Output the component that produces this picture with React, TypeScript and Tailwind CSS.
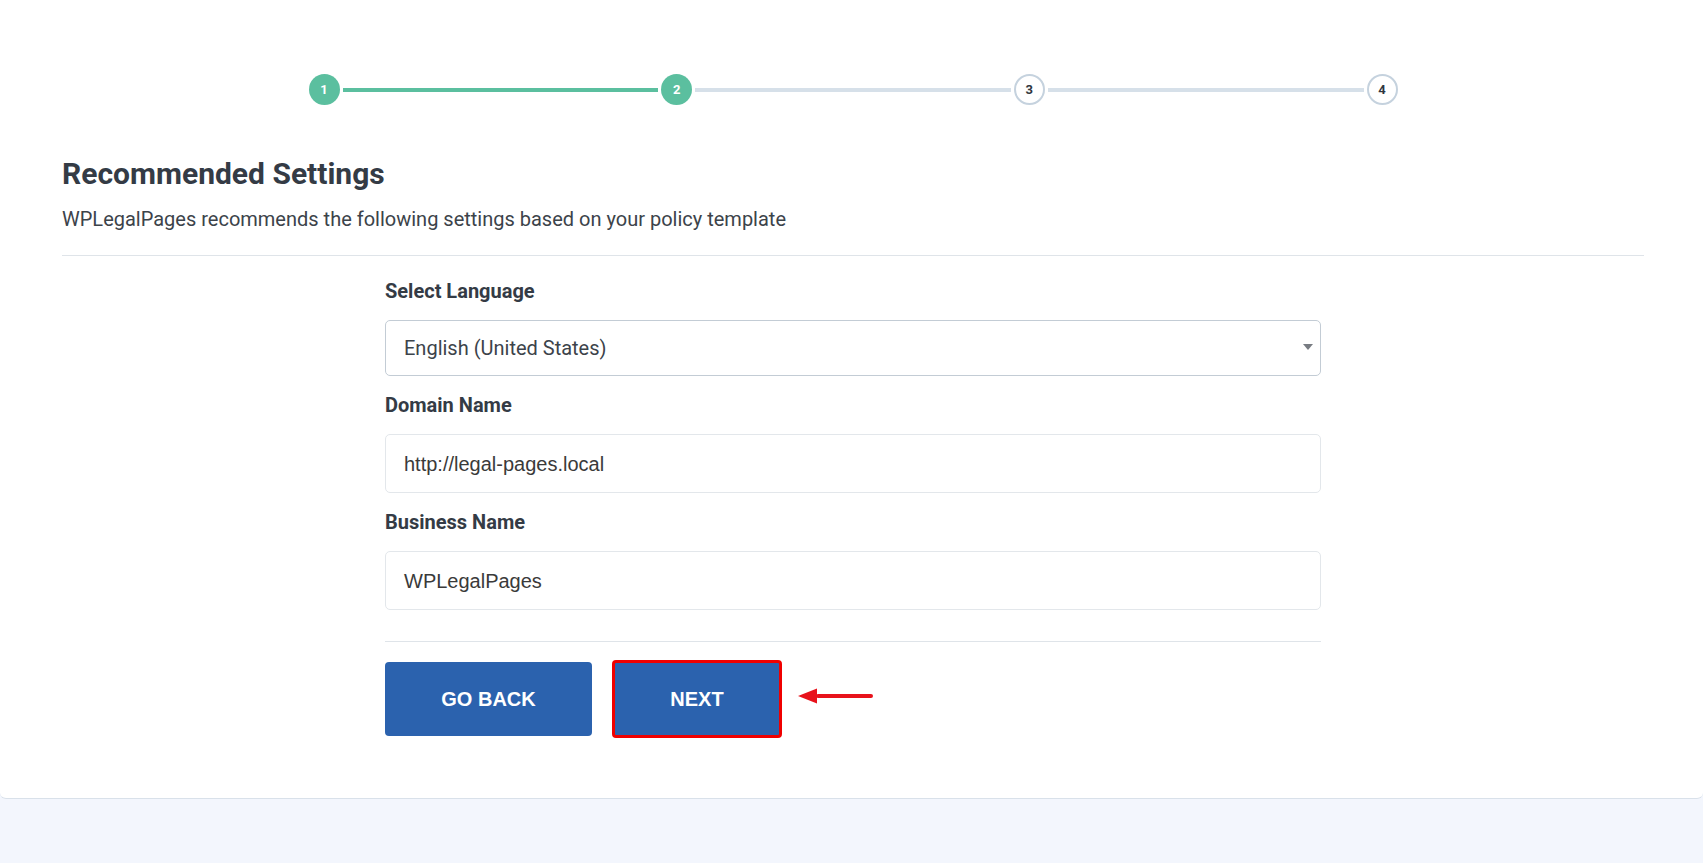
import React from "react";

const roboto = { fontFamily: "Roboto, 'Noto Sans', sans-serif" };

function Step({ n, done }: { n: number; done: boolean }) {
  return done ? (
    <div className="flex h-[31px] w-[31px] shrink-0 items-center justify-center rounded-full bg-[#5bbf9f] text-[13px] font-bold text-white">
      {n}
    </div>
  ) : (
    <div className="flex h-[31px] w-[31px] shrink-0 items-center justify-center rounded-full border-2 border-[#c5d2de] bg-white text-[13px] font-bold text-[#2f3640]">
      {n}
    </div>
  );
}

function Line({ done }: { done: boolean }) {
  return <div className={done ? "mx-[3px] h-[4px] flex-1 bg-[#5bbf9f]" : "mx-[3px] h-[4px] flex-1 bg-[#d6e0e9]"} />;
}

export default function App() {
  return (
    <div className="min-h-screen bg-[#f3f6fd]" style={roboto}>
      <div className="rounded-b-[6px] border-b border-[#d9e1ea] bg-white pb-[60px] pl-[62px] pr-[59px] pt-[74px]">
        <div className="mx-auto flex w-[1089px] items-center">
          <Step n={1} done />
          <Line done />
          <Step n={2} done />
          <Line done={false} />
          <Step n={3} done={false} />
          <Line done={false} />
          <Step n={4} done={false} />
        </div>

        <h1 className="mt-[52px] text-[30px] font-bold leading-[34px] text-[#343b45]">Recommended Settings</h1>
        <p className="mt-[14px] text-[20px] leading-[28px] text-[#3c434a]">
          WPLegalPages recommends the following settings based on your policy template
        </p>
        <div className="mt-[22px] h-px bg-[#dfe4e9]" />

        <div className="mx-auto w-[936px] pt-[23px]">
          <label className="mb-[17px] block text-[20px] font-bold leading-[24px] text-[#343b45]">Select Language</label>
          <div className="relative flex h-[56px] items-center rounded-[5px] border border-[#c3ccd5] bg-white pl-[18px]">
            <span className="text-[20px] text-[#3c434a]">English (United States)</span>
            <svg className="absolute right-[7px] top-[23px]" width="10" height="6" viewBox="0 0 10 6">
              <path d="M0 0 L10 0 L5 6 Z" fill="#787c82" />
            </svg>
          </div>

          <label className="mb-[17px] mt-[17px] block text-[20px] font-bold leading-[24px] text-[#343b45]">Domain Name</label>
          <div
            className="flex h-[59px] items-center rounded-[5px] border border-[#e3e7eb] bg-white pl-[18px] text-[20px] text-[#3a3a3a]"
            style={{ fontFamily: "'Liberation Sans', Arial, sans-serif" }}
          >
            http://legal-pages.local
          </div>

          <label className="mb-[17px] mt-[17px] block text-[20px] font-bold leading-[24px] text-[#343b45]">Business Name</label>
          <div
            className="flex h-[59px] items-center rounded-[5px] border border-[#e3e7eb] bg-white pl-[18px] text-[20px] text-[#3a3a3a]"
            style={{ fontFamily: "'Liberation Sans', Arial, sans-serif" }}
          >
            WPLegalPages
          </div>

          <div className="mt-[31px] h-px bg-[#dfe4e9]" />

          <div className="mt-[18px] flex items-center" style={{ fontFamily: "'Liberation Sans', Arial, sans-serif" }}>
            <button className="flex h-[74px] w-[207px] items-center justify-center rounded-[4px] bg-[#2b62ae] text-[20px] font-bold text-white">
              GO BACK
            </button>
            <button className="ml-[20px] flex h-[78px] w-[170px] items-center justify-center rounded-[4px] border-[3px] border-[#f00000] bg-[#2b62ae] text-[20px] font-bold text-white">
              NEXT
            </button>
            <svg className="mb-[6px] ml-[16px]" width="76" height="18" viewBox="0 0 76 18">
              <path d="M20 9 L73 9" stroke="#e8121b" strokeWidth="4" strokeLinecap="round" />
              <path d="M0 9 L19 1.5 L19 16.5 Z" fill="#e8121b" />
            </svg>
          </div>
        </div>
      </div>
    </div>
  );
}
